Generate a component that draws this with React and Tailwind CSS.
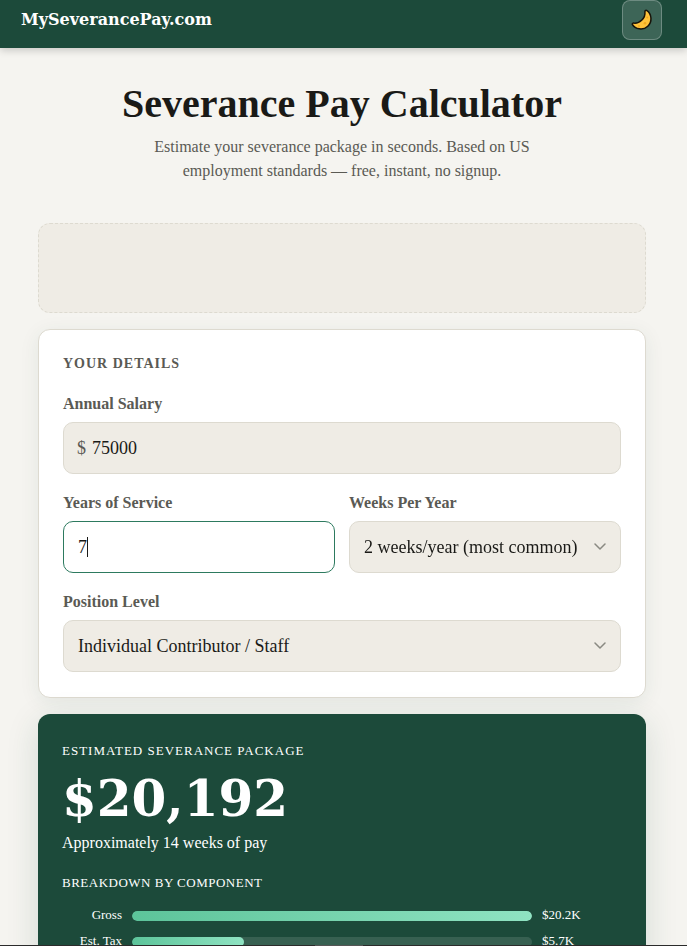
import { useState } from "react";

const field =
  "block h-[52px] w-full rounded-[10px] border border-[#dddad0] bg-[#efece5] px-3.5 text-[18px] text-[#1a1a17] outline-none focus:border-[#2d7a5f] focus:bg-white";
const labelText = "mb-1.5 block text-[16px] leading-6 font-bold text-[#5a5a54]";

function SelectField({ id, label, options }) {
  return (
    <div>
      <label htmlFor={id} className={labelText}>
        {label}
      </label>
      <div className="relative">
        <select id={id} className={`${field} appearance-none pr-10`}>
          {options.map((option) => (
            <option key={option}>{option}</option>
          ))}
        </select>
        <svg
          className="pointer-events-none absolute top-[22px] right-[15px] h-2 w-3"
          viewBox="0 0 12 8"
          fill="none"
          stroke="#8a8a82"
          strokeWidth="1.5"
          strokeLinecap="round"
          strokeLinejoin="round"
          aria-hidden="true"
        >
          <path d="M1 1l5 5 5-5" />
        </svg>
      </div>
    </div>
  );
}

function Moon() {
  return (
    <svg className="h-[22px] w-[22px]" viewBox="0 0 22 22" aria-hidden="true">
      <path
        d="M15.6 1.4C21 5 21.4 12.8 16.8 17.2C12.2 21.6 4.2 20.4 1.3 15.3C1.2 14.4 1.9 13.9 3 14.1C8.8 14.6 14.6 9 13.9 3C13.8 1.8 14.6 1 15.6 1.4Z"
        fill="#ffc33a"
        stroke="#17130a"
        strokeWidth="1.5"
        strokeLinejoin="round"
      />
      <circle cx="16.3" cy="8.5" r="0.9" fill="#f0a91f" />
      <circle cx="14" cy="14.3" r="1.3" fill="#f0a91f" />
      <circle cx="8" cy="17" r="0.9" fill="#f0a91f" />
    </svg>
  );
}

const rows = [
  { name: "Gross", value: "$20.2K", share: 100 },
  { name: "Est. Tax", value: "$5.7K", share: 28 },
];

export default function App() {
  const [salary, setSalary] = useState("75000");
  const [years, setYears] = useState("7");

  return (
    <div className="h-screen overflow-hidden bg-[#f5f4f0] font-['Liberation_Serif',serif] text-[#1a1a17]">
      <header className="relative flex h-12 items-start justify-between bg-[#1c4a3a] pr-[25px] pl-[21px] shadow-[0_2px_8px_rgba(0,0,0,0.2)]">
        <a
          href="#top"
          className="font-['DejaVu_Serif',serif] text-[16px] leading-10 font-bold text-white"
        >
          MySeverancePay.com
        </a>
        <button
          type="button"
          aria-label="Toggle dark mode"
          className="flex h-10 w-10 items-center justify-center rounded-lg border border-white/25 bg-white/15"
        >
          <Moon />
        </button>
      </header>

      <main className="pr-[41px] pl-[38px]">
        <section className="pt-9 pb-10 text-center">
          <h1 className="text-[40px] leading-10 font-bold">Severance Pay Calculator</h1>
          <p className="mx-auto mt-[11px] max-w-[400px] text-[16px] leading-6 text-[#5a5a54]">
            Estimate your severance package in seconds. Based on US employment standards — free,
            instant, no signup.
          </p>
        </section>

        <aside className="h-[90px] rounded-xl border border-dashed border-[#dddad0] bg-[#efece5]" />

        <form className="mt-4 rounded-xl border border-[#dddad0] bg-white px-6 pt-6 pb-[25px] shadow-[0_4px_20px_rgba(28,74,58,0.08)]">
          <h2 className="mb-[18px] text-[14px] leading-5 font-bold tracking-[1px] text-[#5a5a54] uppercase">
            Your Details
          </h2>
          <div className="grid gap-[17px]">
            <div>
              <label htmlFor="salary" className={labelText}>
                Annual Salary
              </label>
              <div className="relative">
                <span className="absolute top-0 left-3.5 text-[18px] leading-[52px] text-[#5a5a54]">
                  $
                </span>
                <input
                  id="salary"
                  value={salary}
                  onChange={(e) => setSalary(e.target.value)}
                  className={`${field} pl-7`}
                />
              </div>
            </div>
            <div className="grid grid-cols-2 gap-3.5">
              <div>
                <label htmlFor="years" className={labelText}>
                  Years of Service
                </label>
                <div className="relative">
                  <input
                    id="years"
                    autoFocus
                    value={years}
                    onChange={(e) => setYears(e.target.value)}
                    className={`${field} caret-transparent`}
                  />
                  <span className="absolute top-4 left-6 h-5 w-px bg-[#1a1a17]" />
                </div>
              </div>
              <SelectField
                id="weeks"
                label="Weeks Per Year"
                options={["2 weeks/year (most common)"]}
              />
            </div>
            <SelectField
              id="level"
              label="Position Level"
              options={["Individual Contributor / Staff"]}
            />
          </div>
        </form>

        <section className="mt-4 rounded-xl bg-[#1c4a3a] px-6 pt-[27px] pb-6 text-white shadow-[0_8px_32px_rgba(28,74,58,0.15)]">
          <h2 className="text-[13px] leading-5 tracking-[1px] uppercase">
            Estimated Severance Package
          </h2>
          <p className="mt-2 font-['DejaVu_Serif',serif] text-[50px] leading-[60px] font-bold">
            $20,192
          </p>
          <p className="mt-0.5 text-[16px] leading-6">Approximately 14 weeks of pay</p>
          <h3 className="mt-[18px] text-[13px] leading-5 tracking-[0.5px] uppercase">
            Breakdown by Component
          </h3>
          <div className="mt-3.5 grid gap-2.5">
            {rows.map((row) => (
              <div key={row.name} className="flex items-end gap-2.5 text-[13px] leading-4">
                <span className="w-[60px] text-right">{row.name}</span>
                <div className="mb-0.5 h-2.5 flex-1 overflow-hidden rounded-full bg-white/12">
                  <div
                    className="h-full rounded-full bg-linear-to-r from-[#5cc49a] to-[#8fe3c2]"
                    style={{ width: `${row.share}%` }}
                  />
                </div>
                <span className="w-20">{row.value}</span>
              </div>
            ))}
          </div>
        </section>
      </main>

      <div className="fixed inset-x-0 bottom-0 flex h-px justify-center bg-[#2b2b2b] pr-[9px]">
        <div className="w-12 bg-[#555555]" />
      </div>
    </div>
  );
}
